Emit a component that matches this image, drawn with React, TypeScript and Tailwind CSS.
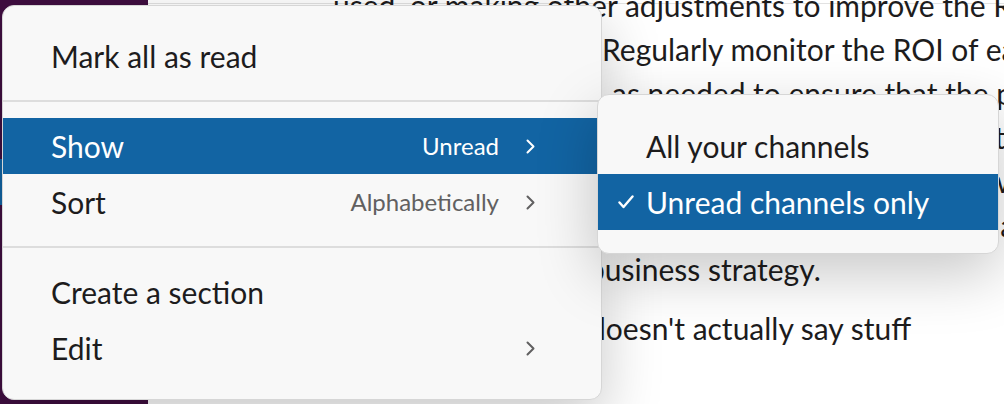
import React from 'react';

const Chevron = ({ color }: { color: string }) => (
  <svg width="9" height="15" viewBox="0 0 9 15" fill="none" className="shrink-0">
    <polyline points="1.5,1.5 7.5,7.5 1.5,13.5" stroke={color} strokeWidth="2" strokeLinecap="round" strokeLinejoin="round" />
  </svg>
);

const Check = () => (
  <svg width="16" height="14" viewBox="0 0 16 14" fill="none" className="shrink-0">
    <polyline points="1.5,7.5 5.5,12 14.5,1.5" stroke="#ffffff" strokeWidth="2.4" strokeLinecap="round" strokeLinejoin="round" />
  </svg>
);

type Row = { label: string; hint?: string; sub?: boolean; active?: boolean };

const MenuRow = ({ row }: { row: Row }) => (
  <div
    className={`flex items-center h-[56px] pl-12 pr-[66px] ${
      row.active ? 'bg-[#1264a3] text-white' : 'text-[#1d1c1d]'
    }`}
  >
    <span className="flex-1 text-[30px] leading-[56px]">{row.label}</span>
    {row.hint && (
      <span className={`text-[24px] mr-[27px] ${row.active ? 'text-white' : 'text-[#616061]'}`}>{row.hint}</span>
    )}
    {row.sub && <Chevron color={row.active ? '#ffffff' : '#616061'} />}
  </div>
);

const Divider = () => <div className="h-[2px] bg-[#dddddd] my-4" />;

const App = () => {
  const lines = [
    { text: 'used, or making other adjustments to improve the ROI of the campaign.', pad: 'pl-[185px]' },
    { text: 'Regularly monitor the ROI of each marketing campaign', pad: 'pl-[454px]' },
    { text: 'as needed to ensure that the plan stays on track and on', pad: 'pl-[464px]' },
    { text: 'and adjust the plan as needed to hit the new targets', pad: 'pl-[448px]' },
    { text: 'goals and the overall data that was gathered by a team', pad: 'pl-[446px]' },
    { text: 'overall health of the company and its business', pad: 'pl-[456px]' },
    { text: 'business strategy.', pad: 'pl-[440px]' },
  ];

  return (
    <div className="relative w-[1004px] h-[404px] overflow-hidden flex bg-white font-['Lato',sans-serif]">
      {/* sidebar */}
      <div className="w-[148px] shrink-0 bg-[#3f0e40] pt-[159px]">
        <div className="h-[46px] bg-[#1164a3]" />
      </div>

      {/* message pane */}
      <div className="flex-1 relative">
        <div className="mt-[3px] h-px bg-[#e2e2e2]" />
        <div className="-mt-[21px] flex flex-col text-[30px] leading-[44px] text-[#1d1c1d] whitespace-nowrap">
          {lines.map((l, i) => (
            <div key={i} className={l.pad}>
              {l.text}
            </div>
          ))}
          <div className="pl-[441px] mt-[15px]">doesn't actually say stuff</div>
        </div>
      </div>

      {/* channel sidebar menu */}
      <div className="absolute left-[2px] top-[5px] w-[600px] rounded-[12px] border border-[#d6d6d6] bg-[#f8f8f8] pt-[22px] pb-[23px] shadow-[0_20px_60px_rgba(0,0,0,0.22)]">
        <MenuRow row={{ label: 'Mark all as read' }} />
        <Divider />
        <MenuRow row={{ label: 'Show', hint: 'Unread', sub: true, active: true }} />
        <MenuRow row={{ label: 'Sort', hint: 'Alphabetically', sub: true }} />
        <Divider />
        <MenuRow row={{ label: 'Create a section' }} />
        <MenuRow row={{ label: 'Edit', sub: true }} />
      </div>

      {/* show submenu */}
      <div className="absolute left-[597px] top-[94px] w-[402px] rounded-[12px] border border-[#d6d6d6] bg-[#f8f8f8] pt-[23px] pb-[23px] shadow-[0_20px_60px_rgba(0,0,0,0.22)]">
        <div className="flex items-center h-[56px] pl-12 text-[30px] text-[#1d1c1d]">All your channels</div>
        <div className="flex items-center h-[56px] pl-[20px] text-[30px] bg-[#1264a3] text-white">
          <span className="w-[28px] flex items-center">
            <Check />
          </span>
          Unread channels only
        </div>
      </div>
    </div>
  );
};

export default App;
